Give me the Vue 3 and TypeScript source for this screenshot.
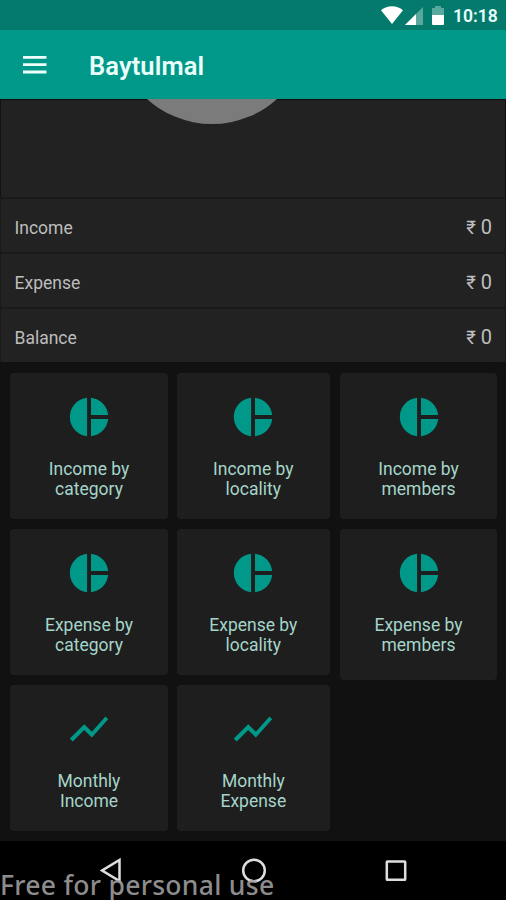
<script setup lang="ts">
interface Total {
  label: string
  amount: string
}
interface Report {
  lines: [string, string]
  icon: 'pie' | 'trend'
  tall?: boolean
}

const totals: Total[] = [
  { label: 'Income', amount: '0' },
  { label: 'Expense', amount: '0' },
  { label: 'Balance', amount: '0' },
]

const reports: Report[] = [
  { lines: ['Income by', 'category'], icon: 'pie' },
  { lines: ['Income by', 'locality'], icon: 'pie' },
  { lines: ['Income by', 'members'], icon: 'pie' },
  { lines: ['Expense by', 'category'], icon: 'pie' },
  { lines: ['Expense by', 'locality'], icon: 'pie' },
  { lines: ['Expense by', 'members'], icon: 'pie', tall: true },
  { lines: ['Monthly', 'Income'], icon: 'trend' },
  { lines: ['Monthly', 'Expense'], icon: 'trend' },
]
</script>

<template>
  <div class="screen">
    <div class="status">
      <svg class="wifi" width="22" height="18" viewBox="0 0 22 18"><path d="M11 18 0 4.2C6.2-1.2 15.8-1.2 22 4.2Z" fill="#fff" /></svg>
      <svg class="signal" width="18" height="18" viewBox="0 0 18 18">
        <path d="M18 0V18H0Z" fill="#58a89e" />
        <path d="M11 7V18H0Z" fill="#fff" />
      </svg>
      <svg class="battery" width="12" height="19" viewBox="0 0 12 19">
        <path d="M3 0H9V2H12V9H0V2H3Z" fill="#58a89e" />
        <path d="M0 9H12V18Q12 19 11 19H1Q0 19 0 18Z" fill="#fff" />
      </svg>
      <span class="clock">10:18</span>
    </div>

    <header class="appbar">
      <svg width="24" height="18" viewBox="0 0 24 18"><path d="M0 1.4H23.5M0 8.7H23.5M0 16H23.5" stroke="#effffc" stroke-width="2.8" /></svg>
      <h1>Baytulmal</h1>
    </header>

    <main>
      <section class="chart">
        <svg width="194" height="25" viewBox="0 72 194 25"><circle cx="97" cy="0" r="97" fill="#7b7b7b" /></svg>
      </section>

      <section class="totals">
        <div v-for="total in totals" :key="total.label" class="total">
          <span>{{ total.label }}</span>
          <span class="amount"><span class="rupee">₹</span> {{ total.amount }}</span>
        </div>
      </section>

      <section class="reports">
        <article v-for="report in reports" :key="report.lines.join(' ')" class="card" :class="{ tall: report.tall }">
          <svg v-if="report.icon === 'pie'" width="46" height="46" viewBox="0 0 24 24">
            <path d="M11 2v20c-5.07-.5-9-4.79-9-10s3.93-9.5 9-10zm2.03 0v8.99H22c-.47-4.74-4.24-8.52-8.97-8.99zm0 11.01V22c4.74-.47 8.5-4.25 8.97-8.99h-8.97z" />
          </svg>
          <svg v-else width="46" height="46" viewBox="0 0 24 24">
            <path d="M3.5 18.49l6-6.01 4 4L22 6.92l-1.41-1.41-7.09 7.97-4-4L2 16.99z" />
          </svg>
          <p>{{ report.lines[0] }}<br />{{ report.lines[1] }}</p>
        </article>
      </section>
    </main>

    <nav>
      <svg width="22" height="26" viewBox="0 0 22 26"><path d="M19.5 3V24L2.2 13.5Z" /></svg>
      <svg width="26" height="26" viewBox="0 0 26 26"><circle cx="13" cy="13.5" r="10.8" /></svg>
      <svg width="22" height="26" viewBox="0 0 22 26"><rect x="1.8" y="4.4" width="18.4" height="18.4" rx="0.6" /></svg>
      <span class="watermark">Free for personal use</span>
    </nav>
  </div>
</template>

<style>
body {
  margin: 0;
  background: #111;
}
</style>

<style scoped>
.screen {
  width: 506px;
  height: 900px;
  display: flex;
  flex-direction: column;
  overflow: hidden;
  background: #111;
  font-family: Roboto, 'Noto Sans', sans-serif;
}
.status {
  height: 30px;
  box-sizing: border-box;
  padding: 6px 9px 0 0;
  display: flex;
  justify-content: flex-end;
  align-items: flex-start;
  background: #047a6c;
}
.signal {
  margin: 1px 0 0 2px;
}
.battery {
  margin: 0 0 0 9px;
}
.clock {
  width: 44px;
  margin-left: 9px;
  color: #e9fffb;
  font-size: 17.5px;
  font-weight: 600;
  line-height: 21px;
  white-space: nowrap;
}
.appbar {
  height: 69px;
  box-sizing: border-box;
  padding: 0 23px;
  display: flex;
  align-items: center;
  gap: 42px;
  background: #009888;
}
h1 {
  margin: 3px 0 0;
  color: #e9fffb;
  font-size: 25.5px;
  font-weight: 600;
  letter-spacing: 0.1px;
  line-height: 30px;
}
main {
  flex: 1;
}
.chart {
  height: 98px;
  margin: 0 1px;
  background: #222;
  box-shadow: inset 0 2px 1px -1px #111;
}
.chart svg {
  display: block;
  margin-left: 114px;
}
.totals {
  display: grid;
  gap: 2px;
  padding: 2px 1px 0;
  background: #1a1a1a;
}
.total {
  height: 53px;
  box-sizing: border-box;
  padding: 4px 13px 0 13.5px;
  display: flex;
  align-items: center;
  justify-content: space-between;
  border-radius: 2px;
  background: #222;
  color: #bdbdbd;
  font-size: 17.5px;
}
.amount {
  font-size: 20px;
  margin-top: -1px;
}
.rupee {
  font-size: 18.5px;
}
.reports {
  padding: 11px 9px 10px 10px;
  display: grid;
  grid-template-columns: 158px 152.6px 157px;
  grid-auto-rows: 146px;
  justify-content: space-between;
  row-gap: 10px;
}
.card {
  height: 146px;
  box-sizing: border-box;
  padding-top: 21px;
  display: flex;
  flex-direction: column;
  align-items: center;
  border-radius: 4px;
  background: #1e1e1e;
}
.card:nth-child(3n + 2) {
  margin-left: -0.7px;
  margin-right: 0.7px;
}
.card.tall {
  height: 151px;
}
.card svg {
  flex: none;
  fill: #009888;
}
.card p {
  margin: 19px 0 0;
  color: #a5d5ca;
  font-size: 17.5px;
  line-height: 20.3px;
  text-align: center;
  white-space: nowrap;
}
nav {
  position: relative;
  height: 59px;
  box-sizing: border-box;
  padding: 16px 99px 0 100px;
  display: flex;
  justify-content: space-between;
  align-items: flex-start;
  background: #000;
}
nav svg {
  fill: none;
  stroke: #dedede;
  stroke-width: 2.5;
}
.watermark {
  position: absolute;
  left: 0;
  top: 29px;
  color: rgba(160, 160, 160, 0.9);
  font-family: 'Noto Sans', sans-serif;
  font-size: 26.5px;
  font-weight: 500;
  letter-spacing: 0.3px;
  line-height: 30px;
  white-space: nowrap;
}
</style>
